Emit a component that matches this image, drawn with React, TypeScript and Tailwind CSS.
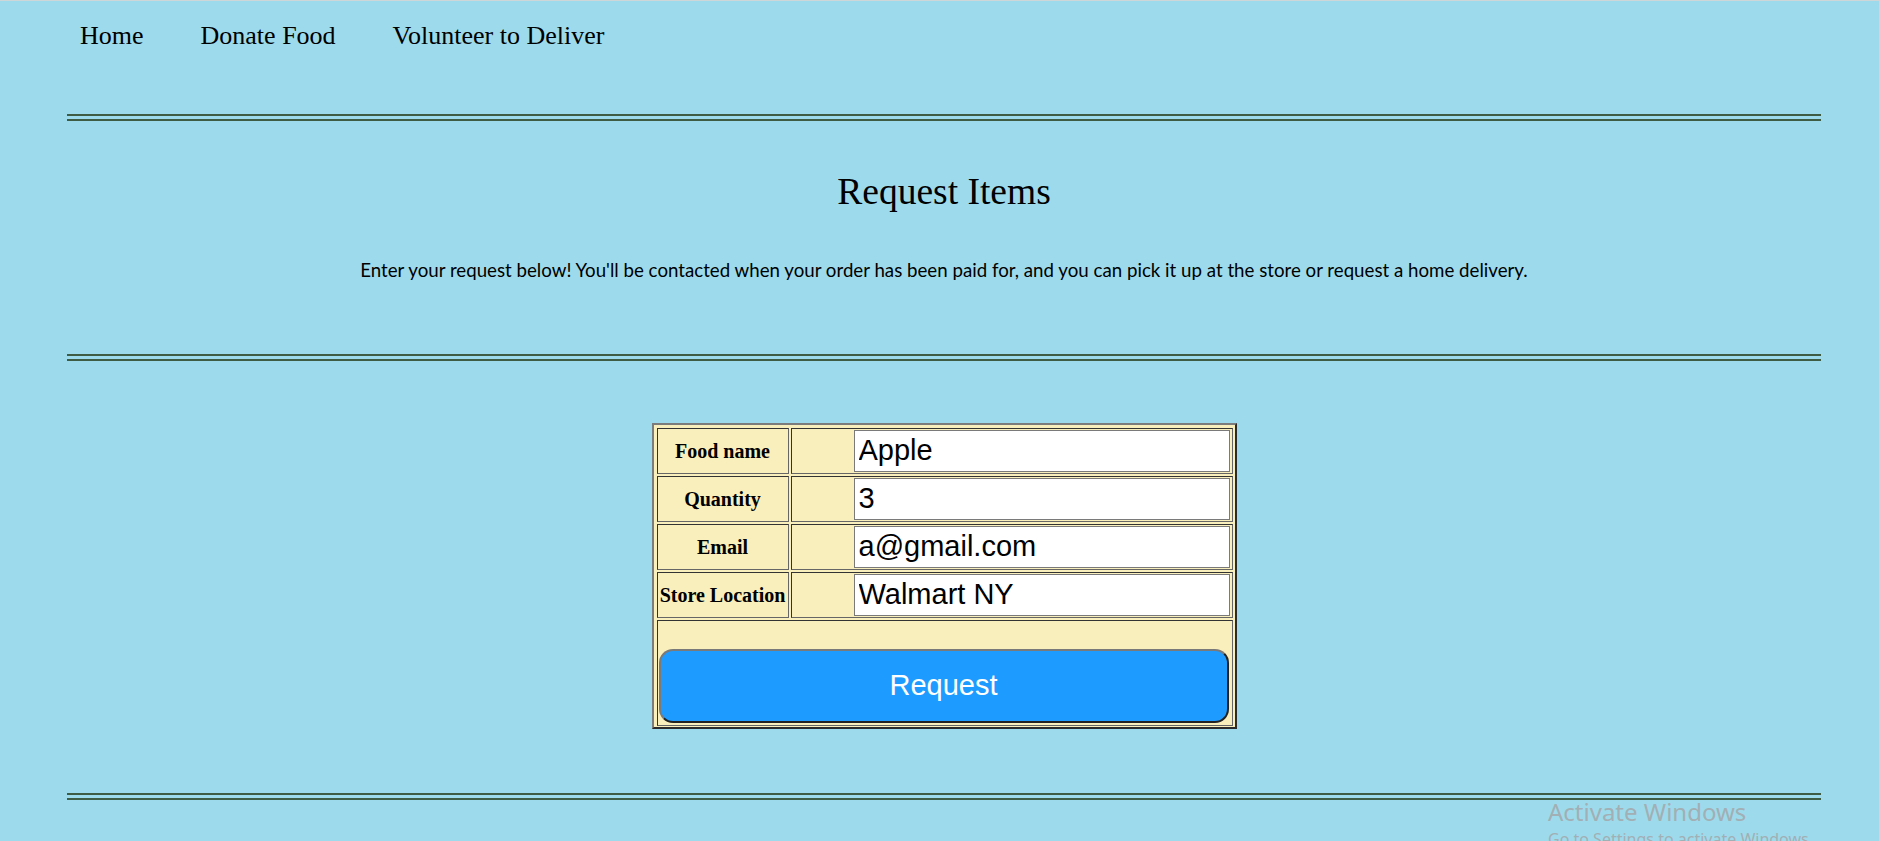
import React from "react";

function Hr() {
  return <div className="h-[7px] w-full border-y-2 border-[#3e5b43]" />;
}

const rows = [
  { label: "Food name", value: "Apple" },
  { label: "Quantity", value: "3" },
  { label: "Email", value: "a@gmail.com" },
  { label: "Store Location", value: "Walmart NY" },
];

export default function App() {
  return (
    <div className="relative min-h-screen overflow-hidden border-t border-[#cfd6d8] bg-[#9ddbec] text-black">
      <nav
        className="flex gap-[57px] pl-[80px] pt-[21px] text-[26px] leading-[28px]"
        style={{ fontFamily: '"Liberation Serif", "Times New Roman", serif' }}
      >
        <span>Home</span>
        <span>Donate Food</span>
        <span>Volunteer to Deliver</span>
      </nav>

      <div className="ml-[67px] w-[1754px]">
        <div className="mt-[64px]">
          <Hr />
        </div>

        <h1
          className="mt-[49px] text-center text-[37.5px] leading-[44px] font-normal"
          style={{ fontFamily: '"Liberation Serif", "Times New Roman", serif' }}
        >
          Request Items
        </h1>

        <p
          className="mt-[46px] text-center text-[18.7px] leading-[21px]"
          style={{ fontFamily: 'Lato, "Noto Sans", sans-serif' }}
        >
          Enter your request below! You'll be contacted when your order has been paid for, and you can pick it up at the store or request a home delivery.
        </p>

        <div className="mt-[73px]">
          <Hr />
        </div>

        <div className="mt-[62px] flex justify-center">
          <div className="w-[585px] border-2 border-t-[#7c7c7c] border-l-[#7c7c7c] border-r-[#2b2b2b] border-b-[#2b2b2b] bg-[#f9efbd] pt-[3px] pl-[3px] pr-[2px] pb-[1px]">
            <div className="grid grid-cols-[132px_442px] gap-[2px]">
              {rows.map((r) => (
                <React.Fragment key={r.label}>
                  <div
                    className="flex h-[46px] items-center justify-center border border-t-[#333] border-l-[#333] border-r-[#666] border-b-[#666] text-[20px] font-bold whitespace-nowrap"
                    style={{ fontFamily: '"Liberation Serif", "Times New Roman", serif' }}
                  >
                    {r.label}
                  </div>
                  <div className="flex h-[46px] items-center justify-end border border-t-[#333] border-l-[#333] border-r-[#666] border-b-[#666] py-[1px] pl-[1px] pr-[2px]">
                    <input
                      readOnly
                      value={r.value}
                      className="h-[42px] w-[376px] border border-[#7a7a7a] bg-white pl-[4px] text-[29px] text-black outline-none"
                      style={{ fontFamily: '"Liberation Sans", Arial, sans-serif' }}
                    />
                  </div>
                </React.Fragment>
              ))}
              <div className="col-span-2 h-[106px] border border-t-[#333] border-l-[#333] border-r-[#666] border-b-[#666] pt-[28px] pl-[1px] pr-[3px] pb-[2px]">
                <button
                  className="flex h-[74px] w-[570px] items-center justify-center rounded-[14px] border-2 border-t-[#7a7a7a] border-l-[#7a7a7a] border-r-[#222] border-b-[#222] bg-[#1e9bff] text-[29px] text-white"
                  style={{ fontFamily: '"Liberation Sans", Arial, sans-serif' }}
                >
                  Request
                </button>
              </div>
            </div>
          </div>
        </div>

        <div className="mt-[64px]">
          <Hr />
        </div>
      </div>

      <div
        className="pointer-events-none absolute left-[1548px] top-[795px] text-[#a2afb4]"
        style={{ fontFamily: '"Noto Sans", "Open Sans", sans-serif' }}
      >
        <div className="text-[24px] leading-[32px]">Activate Windows</div>
        <div className="text-[16px] leading-[22px]">Go to Settings to activate Windows.</div>
      </div>
    </div>
  );
}
